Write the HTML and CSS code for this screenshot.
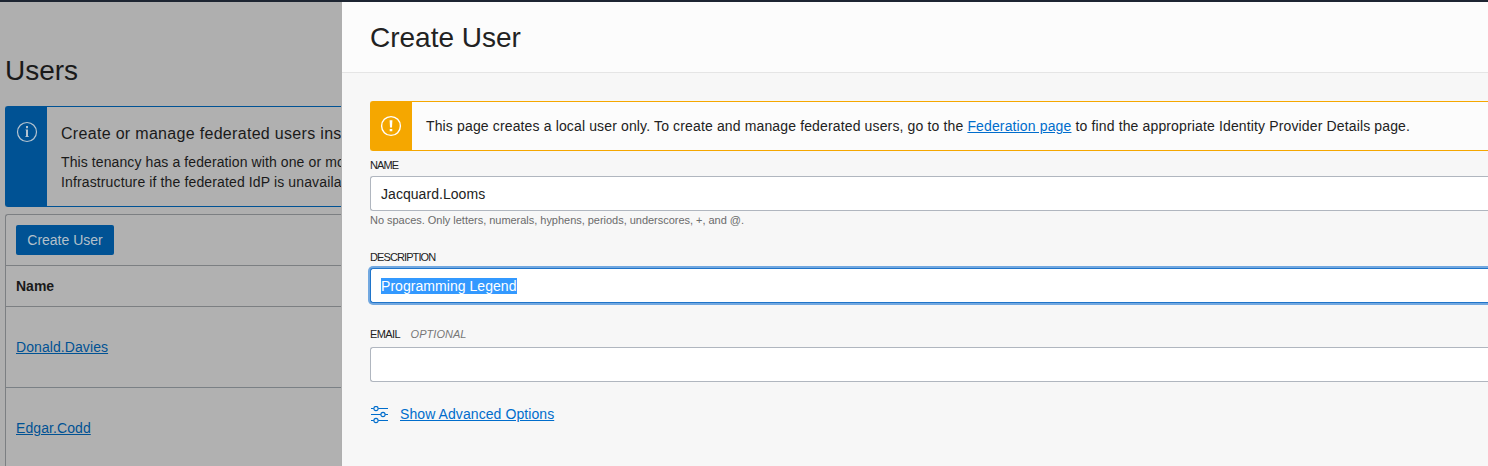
FILE: index.html
```html
<!DOCTYPE html>
<html lang="en">
<head>
<meta charset="utf-8">
<title>Create User</title>
<link rel="stylesheet" href="styles.css">
</head>
<body>
<div class="topbar"></div>
<div class="layout">
  <main class="users">
    <h1 class="users-title">Users</h1>
    <section class="info">
      <div class="info-mark">
        <svg width="22" height="22" viewBox="0 0 22 22" fill="none"><circle cx="11" cy="11" r="9.5" stroke="currentColor" stroke-width="1.2"/><path d="M10 5h2v2.2h-2zM9.5 8.4h2.5V16h-2V9.2h-.5zM9.3 15.2h3.6v.8H9.3z" fill="currentColor"/></svg>
      </div>
      <div class="info-body">
        <h2 class="info-title">Create or manage federated users ins</h2>
        <p class="info-text info-text-first">This tenancy has a federation with one or mo</p>
        <p class="info-text">Infrastructure if the federated IdP is unavaila</p>
      </div>
    </section>
    <section class="table">
      <div class="toolbar"><button class="create">Create User</button></div>
      <div class="head">Name</div>
      <div class="row"><a class="user-link">Donald.Davies</a></div>
      <div class="row"><a class="user-link">Edgar.Codd</a></div>
    </section>
  </main>
  <aside class="panel">
    <header class="panel-header"><h1 class="panel-title">Create User</h1></header>
    <form class="form">
      <div class="alert">
        <div class="alert-mark">
          <svg width="22" height="22" viewBox="0 0 22 22" fill="none"><circle cx="11" cy="11" r="9.4" stroke="currentColor" stroke-width="1.4"/><path d="M9.6 5.2h2.8L12 12.4h-2zM9.7 14h2.6v2.2H9.7z" fill="currentColor"/></svg>
        </div>
        <p class="alert-text">This page creates a local user only. To create and manage federated users, go to the <a class="link">Federation page</a> to find the appropriate Identity Provider Details page.</p>
      </div>
      <div class="label label-name">NAME</div>
      <div class="input">Jacquard.Looms</div>
      <div class="hint">No spaces. Only letters, numerals, hyphens, periods, underscores, +, and @.</div>
      <div class="label label-description">DESCRIPTION</div>
      <div class="input input-focus"><span class="selection">Programming Legend</span></div>
      <div class="label label-email">EMAIL<em class="optional">OPTIONAL</em></div>
      <div class="input"></div>
      <div class="advanced">
        <svg width="18" height="18" viewBox="0 0 18 18" fill="none" stroke="currentColor" stroke-width="1.1"><path d="M0 2.5h2.8M7.2 2.5H17M0 8.5h9.8M14.2 8.5H17M0 14.5h2.8M7.2 14.5H17"/><circle cx="5" cy="2.5" r="2.1"/><circle cx="12" cy="8.5" r="2.1"/><circle cx="5" cy="14.5" r="2.1"/></svg>
        <a class="link">Show Advanced Options</a>
      </div>
    </form>
  </aside>
</div>
</body>
</html>
```

FILE: styles.css
```css
* { box-sizing: border-box; }
body {
  margin: 0;
  height: 466px;
  overflow: hidden;
  background: #f7f7f7;
  color: #222;
  font: 14px/20px "Liberation Sans", Arial, sans-serif;
}
h1, h2, p { margin: 0; font-weight: 400; }
.topbar { height: 2px; background: #1d2532; }
.layout { display: flex; height: 464px; }

.users {
  width: 342px;
  flex: none;
  overflow: hidden;
  padding: 49px 1px 0 5px;
  background: #afafaf;
  color: #1a1a1a;
}
.users-title { font-size: 28px; line-height: 40px; }
.info {
  display: flex;
  height: 101px;
  margin-top: 15px;
  border: 1px solid #005294;
  border-right: 0;
  border-radius: 3px 0 0 3px;
  background: #b0b0b0;
}
.info-mark {
  width: 41px;
  flex: none;
  padding: 14px 0 0 10px;
  background: #005294;
  color: #b5c4d0;
}
.info-body { padding: 16px 0 0 14px; overflow: hidden; white-space: nowrap; }
.info-title { font-size: 16px; line-height: 22px; margin-bottom: 7px; letter-spacing: 0.31px; }
.info-text { line-height: 20px; letter-spacing: 0.13px; }
.info-text-first { letter-spacing: 0.1px; }
.table {
  height: 300px;
  margin-top: 7px;
  border: 1px solid #7c7f82;
  border-width: 1px 0 0 1px;
  border-radius: 3px 0 0 0;
  background: #b1b1b1;
}
.toolbar { height: 51px; padding: 10px; border-bottom: 1px solid #7c7f82; }
.create {
  display: block;
  width: 98px;
  height: 30px;
  padding: 0;
  border: 0;
  border-radius: 2px;
  background: #005294;
  color: #b4c0ca;
  font: inherit;
}
.head {
  height: 41px;
  padding-left: 10px;
  border-bottom: 1px solid #7c7f82;
  font-weight: 700;
  line-height: 40px;
}
.row {
  height: 81px;
  padding-left: 10px;
  border-bottom: 1px solid #7a8085;
  line-height: 80px;
}
.user-link { color: #005294; text-decoration: underline; letter-spacing: 0.08px; }

.panel { flex: 1; min-width: 0; overflow: hidden; background: #f7f7f7; }
.panel-header {
  height: 71px;
  padding: 16px 28px 0;
  border-bottom: 1px solid #e5e5e5;
  background: #fcfcfc;
}
.panel-title { font-size: 28px; line-height: 40px; }
.form { padding: 28px 0 0 28px; }
.alert {
  display: flex;
  height: 50px;
  border: 1px solid #f5a700;
  border-right: 0;
  border-radius: 3px 0 0 3px;
  background: #fcfcfc;
}
.alert-mark {
  width: 41px;
  flex: none;
  padding: 13px 0 0 9px;
  background: #f5a700;
  color: #fff;
}
.alert-text { padding: 14px 0 0 14px; white-space: nowrap; letter-spacing: 0.14px; }
.link { color: #006dcc; text-decoration: underline; }
.label { height: 15px; font-size: 11px; line-height: 15px; letter-spacing: -0.9px; }
.label-name { margin: 7px 0 3px; }
.label-description { margin: 22px 0 3px; }
.label-email { margin: 24px 0 5px; letter-spacing: -0.6px; }
.optional { margin-left: 10.6px; color: #777; letter-spacing: 0.03px; }
.input {
  height: 35px;
  padding-left: 10px;
  border: 1px solid #b0b6bf;
  border-right: 0;
  border-radius: 3px 0 0 3px;
  background: #fff;
  line-height: 34px;
  letter-spacing: 0.05px;
}
.input-focus { border-color: #2075ca; box-shadow: 0 0 0 2px #72a8e0; }
.selection { background: #3399ff; color: #fff; }
.hint { height: 17px; padding-top: 1px; color: #6b6b6b; font-size: 11px; line-height: 17px; letter-spacing: -0.025px; }
.advanced { display: flex; gap: 12px; margin-top: 22px; padding-left: 1px; color: #006dcc; }
.advanced svg { flex: none; margin-top: 2px; }
.advanced .link { margin-left: -1px; letter-spacing: 0.08px; }
```
